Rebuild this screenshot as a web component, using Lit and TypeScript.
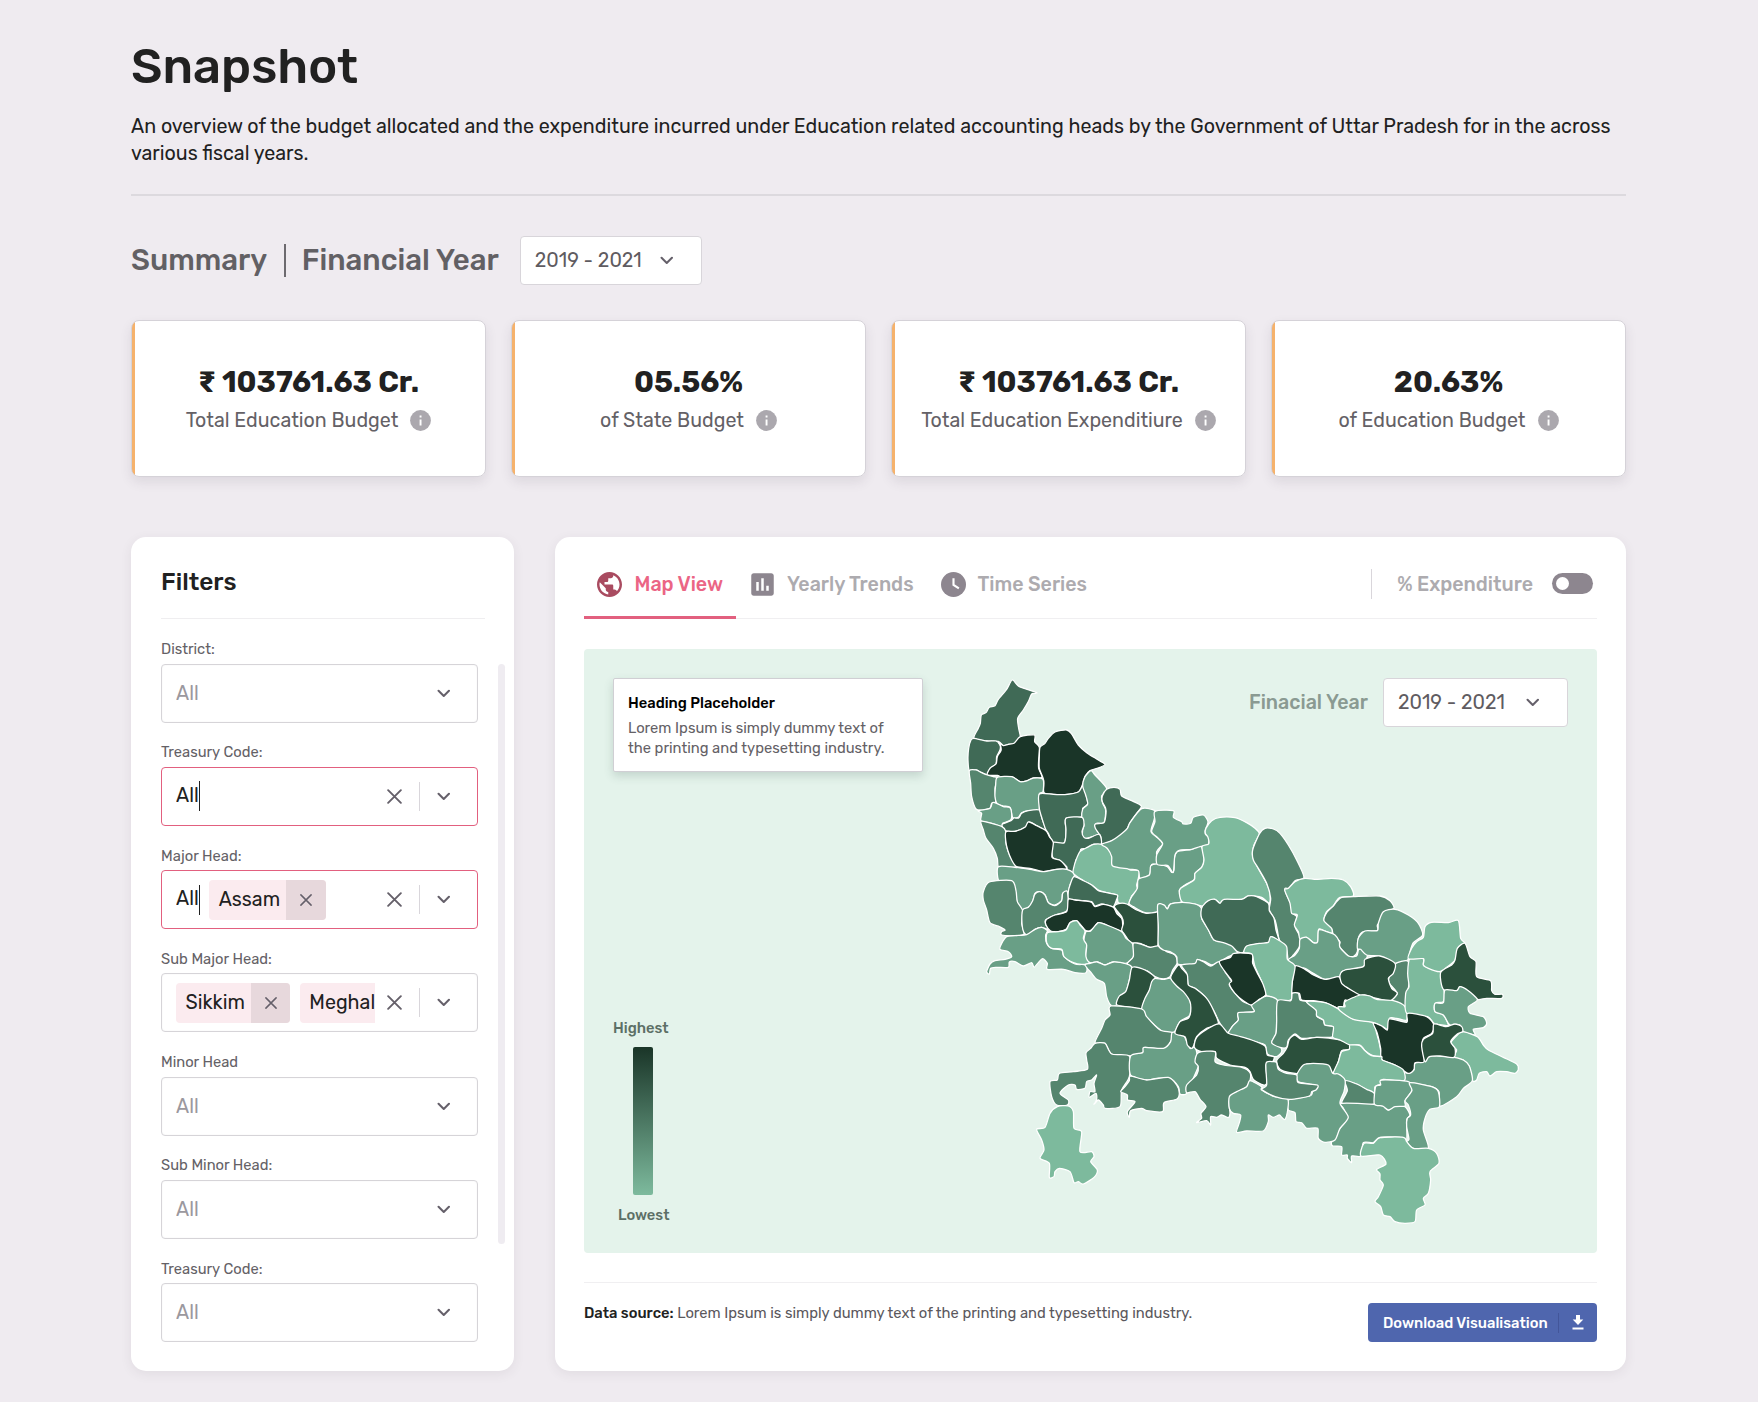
import { LitElement, html, css, svg, nothing } from "lit";
import { customElement } from "lit/decorators.js";

type Tone = "a" | "b" | "c" | "d" | "e" | "f";
type Sheet = [number, number, [Tone, string][]];

/* District outlines, grouped by survey sheet. Each sheet has its own origin and a 3:1 scale. */
const SHEETS: Sheet[] = [
  [940, 660, [
    ["c", "217,60 238,80 290,98 275,102 265,125 250,150 233,175 236,205 241,232 228,250 205,253 190,257 175,244 140,243 102,235 115,205 121,190 124,165 138,158 148,142 165,137 175,118 200,88"],
    ["c", "102,235 140,243 168,243 180,255 180,270 170,290 168,312 150,325 142,345 125,338 108,330 88,332 84,300 86,265 93,240"],
    ["a", "176,248 190,257 205,253 222,250 241,230 283,225 284,245 298,262 296,300 296,325 306,352 280,354 262,362 240,365 215,350 185,352 172,346 142,345 150,325 168,312 172,290 183,272 182,258"],
    ["a", "300,262 315,250 325,235 345,216 380,210 395,222 415,255 440,278 475,300 495,313 480,322 450,332 435,350 428,372 415,396 375,404 340,403 312,398 311,360 298,325 298,290"],
    ["d", "88,332 108,330 125,338 142,345 160,350 172,355 165,385 167,425 155,430 150,445 130,450 108,447 95,410 92,370"],
    ["e", "172,352 215,350 240,365 262,362 280,354 309,358 309,395 298,402 297,450 265,452 245,458 235,472 218,472 210,442 190,438 172,432 165,410 167,375"],
    ["e", "115,452 150,445 157,428 170,430 190,440 210,443 215,462 212,480 188,490 186,500 155,490 123,482 125,460"],
    ["c", "188,492 213,482 222,474 236,474 245,460 265,452 298,450 306,475 317,510 295,500 268,486 255,502 225,514 195,512 187,500"],
    ["c", "298,402 340,403 375,404 415,396 428,378 437,400 443,432 428,445 426,470 378,475 378,510 373,548 340,548 325,520 317,508 306,475 298,445"],
    ["e", "453,332 465,345 500,385 485,408 488,430 497,450 492,488 468,490 470,510 478,522 440,535 428,530 428,510 432,495 425,475 428,448 443,432 437,405 428,378 435,350"],
    ["c", "500,388 522,382 540,388 545,408 575,422 604,438 590,460 570,488 560,510 540,530 510,545 485,553 482,530 466,505 466,492 492,488 498,460 497,445 487,425 487,408"],
    ["c", "378,475 426,472 432,495 426,515 432,532 445,535 478,523 484,552 460,553 440,565 422,568 420,590 408,600 405,625 398,637 382,632 380,620 360,602 338,592 338,548 373,548 378,510"],
    ["d", "123,484 155,490 186,500 197,513 197,545 205,575 218,602 228,620 195,622 175,620 172,595 160,565 138,535 130,510"],
    ["a", "198,515 225,514 255,502 265,486 290,497 318,512 328,530 340,548 336,592 362,602 380,626 350,628 310,635 270,625 230,620 215,600 203,570 197,540"],
  ]],
  [960, 860, [
    ["e", "115,20 165,22 210,28 250,35 290,28 320,28 342,40 342,50 330,75 325,95 308,100 305,122 285,135 265,128 255,105 240,95 225,100 218,125 205,142 188,150 172,130 165,95 155,65 130,62 115,60"],
    ["f", "340,40 342,20 348,0 360,-25 382,-38 400,-47 425,-47 445,-32 457,-10 457,15 495,20 510,30 537,32 535,55 530,75 532,90 515,108 505,133 475,128 470,105 440,98 415,90 395,75 370,62"],
    ["c", "342,50 370,62 395,75 415,92 440,98 472,105 470,118 460,140 440,135 425,132 405,138 395,125 370,122 345,120 325,115 325,95 330,75"],
    ["d", "88,66 155,62 168,92 172,125 188,152 185,190 192,222 165,227 125,225 125,215 135,210 118,200 90,188 80,150 70,120 70,95"],
    ["d", "188,150 205,142 218,122 225,102 240,95 255,105 265,128 285,137 305,122 308,100 322,95 322,150 285,165 257,180 258,195 268,210 245,202 225,208 205,225 192,218 186,190"],
    ["a", "325,118 345,120 375,123 395,127 405,140 430,133 460,142 470,160 485,175 488,195 485,213 460,205 440,195 415,188 400,205 388,213 375,210 360,192 348,182 330,188 318,208 295,215 272,213 258,195 258,180 285,165 320,155"],
    ["b", "463,140 480,130 500,132 530,150 560,160 593,155 595,200 593,258 570,262 540,250 512,248 495,225 485,210 490,190 485,170"],
    ["e", "140,230 165,227 200,224 225,208 245,202 262,212 257,225 260,250 275,265 305,270 312,290 345,312 378,315 378,338 345,338 310,328 262,328 262,310 248,296 235,308 222,322 215,308 190,318 165,305 148,306 145,322 110,322 92,325 88,342 80,335 90,312 105,302 135,298 155,290 145,275 120,268 125,250"],
    ["f", "262,218 295,215 318,210 330,188 350,182 360,195 375,213 370,235 380,250 378,285 388,308 365,313 340,308 312,290 305,268 275,265 260,248"],
    ["e", "378,215 392,213 415,188 440,195 485,215 498,235 518,252 520,290 498,310 460,306 435,315 412,306 390,308 378,290 380,255 372,240"],
    ["d", "520,250 545,253 570,262 595,258 620,275 645,285 652,308 638,330 630,350 610,357 585,350 560,332 515,322 502,310 520,290"],
    ["e", "375,315 390,310 412,306 435,315 460,306 500,312 515,322 508,360 498,395 480,408 470,435 453,436 440,410 433,370 410,358 395,340"],
    ["b", "517,322 555,330 585,352 575,375 565,400 552,425 545,447 510,442 470,434 478,408 497,395 508,360"],
    ["e", "585,355 610,358 632,355 650,375 680,400 692,430 690,465 660,485 642,517 610,515 580,492 550,462 545,445 555,415 568,390 575,365"],
    ["d", "453,438 545,447 560,470 600,510 637,518 632,545 610,567 555,562 548,578 510,588 455,582 435,550 405,548 425,505 435,480 450,465"],
    ["d", "405,550 435,550 455,582 508,588 508,650 485,690 480,740 435,745 430,735 415,720 402,733 410,718 408,700 388,712 390,695 405,695 402,670 410,645 395,660 380,665 375,685 350,688 345,675 325,675 300,700 325,720 322,735 290,735 275,710 270,665 292,660 298,640 340,635 382,628 380,600 378,578 392,565"],
    ["e", "512,588 548,578 552,562 610,565 632,545 637,517 670,525 690,565 705,560 712,585 718,610 700,655 680,700 660,702 655,680 630,655 590,655 560,660 512,645"],
    ["d", "512,648 560,660 625,652 650,675 658,700 650,718 612,728 608,755 560,752 545,745 512,752 508,772 502,755 525,725 503,720 502,705 482,695 495,680 508,662"],
  ]],
  [1120, 760, [
    ["e", "65,146 105,152 102,180 93,215 115,235 128,252 110,275 112,312 95,314 88,345 60,355 55,332 25,327 -22,318 -25,290 -38,265 -55,253 -25,242 0,225 22,205 30,188"],
    ["e", "88,345 92,318 112,312 142,320 155,337 162,330 163,295 172,275 215,268 240,257 250,275 252,300 245,322 225,340 222,360 195,375 178,392 185,425 150,432 142,448 132,435 115,434 113,455 75,458 40,440 27,430 35,410 52,385 55,358"],
    ["e", "105,154 160,152 160,172 185,185 190,192 212,190 220,172 250,165 264,185 256,210 256,222 266,232 264,255 240,260 215,268 180,270 165,285 160,337 150,325 142,316 112,314 110,285 128,252 115,235 95,215 105,185"],
    ["f", "256,220 258,205 275,182 300,172 345,173 380,188 405,205 418,222 402,255 398,290 415,325 440,370 450,400 448,430 425,412 385,408 365,418 310,420 300,430 285,418 265,425 248,438 225,432 187,426 178,400 182,385 222,360 225,340 245,322 252,300 246,260 266,252 264,232"],
    ["d", "418,222 435,205 460,207 480,220 505,255 530,300 552,352 525,362 510,385 495,385 500,405 512,430 518,460 530,470 525,500 540,530 538,560 520,585 505,600 500,570 478,540 472,510 465,480 448,450 452,415 440,370 415,325 400,300 398,270"],
    ["e", "113,435 132,435 142,447 152,432 187,427 225,432 244,445 245,475 265,508 282,540 320,548 350,565 352,578 325,590 300,605 275,615 255,605 232,600 225,612 175,613 170,590 150,575 130,570 115,555 115,500"],
    ["c", "248,438 265,422 285,418 300,430 312,418 365,418 385,408 410,410 445,430 448,452 462,475 468,510 478,545 455,530 448,550 415,552 380,560 370,577 352,575 335,558 310,548 282,540 265,510 245,475 243,455"],
  ]],
  [1180, 860, [
    ["f", "314,90 325,85 345,65 375,55 410,58 455,55 490,60 512,80 520,108 480,112 468,125 460,138 440,155 432,182 455,202 455,220 432,212 416,208 413,245 400,248 380,232 360,238 355,215 343,195 352,165 335,160 330,130"],
    ["d", "470,125 485,112 520,110 600,108 630,122 642,145 618,155 610,178 592,195 592,212 550,215 535,235 532,275 520,290 505,288 478,260 480,245 460,225 455,205 432,182 440,158 460,138"],
    ["e", "360,238 380,232 400,248 413,245 416,210 440,215 465,225 478,245 480,262 505,288 530,288 536,268 550,268 562,285 560,295 550,320 505,330 485,335 478,350 435,358 400,340 375,325 345,318 325,300 345,285 358,265"],
    ["a", "345,318 375,328 400,345 435,358 475,350 485,365 505,385 540,403 515,425 495,420 490,440 475,445 435,428 400,422 365,420 358,400 335,398 337,365"],
    ["f", "192,278 200,258 238,250 265,247 272,230 295,240 320,260 322,298 345,318 337,365 335,400 332,420 290,422 260,408 245,365 225,320 215,282"],
    ["d", "5,315 45,310 52,298 70,305 92,318 118,305 135,335 155,365 148,375 170,405 190,425 215,436 222,455 175,460 175,480 158,498 142,518 120,490 100,450 75,410 45,385 25,375 20,340"],
    ["a", "118,305 150,293 162,280 215,282 218,310 235,345 250,375 257,405 235,420 215,435 190,422 165,400 148,372 155,362 135,335"],
    ["b", "-5,315 5,325 22,345 25,375 45,385 80,415 100,450 115,492 80,505 50,530 42,555 35,565 22,555 15,530 -15,520 0,485 25,475 32,455 30,425 10,395 -10,378 -28,352"],
    ["e", "260,408 293,422 290,480 288,520 275,548 300,560 305,575 290,590 262,582 255,555 225,545 175,530 145,522 158,498 175,480 175,458 222,455 215,436 240,418"],
    ["b", "118,492 145,520 175,528 215,540 255,558 262,585 282,590 278,605 258,615 262,665 250,675 220,658 210,635 195,622 150,615 110,595 105,575 65,575 43,562 50,532 80,508"],
    ["d", "293,422 332,422 337,400 355,400 360,420 380,425 408,450 412,470 430,480 435,495 460,500 458,530 410,532 365,535 345,522 325,540 320,562 300,562 275,548 288,520 290,485"],
    ["b", "290,602 310,580 322,560 328,538 345,525 365,538 410,532 450,535 480,540 512,550 508,568 485,572 475,605 460,638 440,625 380,612 365,640 330,638 300,628"],
  ]],
  [1340, 860, [
    ["e", "130,155 165,148 205,165 235,190 248,225 220,248 210,275 203,300 165,310 140,300 118,288 80,285 62,268 52,265 55,235 75,213 112,212 115,190"],
    ["d", "165,312 203,303 210,345 205,385 195,440 180,430 152,423 172,400 148,370 148,348 160,340"],
    ["b", "0,345 15,330 70,320 75,298 120,288 165,310 160,340 145,355 155,385 172,400 150,423 110,415 75,405 60,405 25,385 5,370"],
    ["f", "-100,425 -45,428 0,450 35,475 98,488 110,520 120,560 122,590 95,585 75,572 60,555 30,555 0,540 -22,532 -20,500 -45,495 -50,480 -70,468 -72,450"],
    ["f", "15,425 60,405 90,408 110,418 160,422 195,440 200,480 170,475 148,475 145,508 125,498 98,487 40,478 0,452 -5,440 15,440"],
    ["f", "210,295 250,295 252,318 300,335 308,370 313,400 310,425 285,430 285,455 310,465 325,495 305,495 282,490 262,470 200,460 197,400 207,380 203,340"],
    ["f", "215,265 230,245 250,232 255,200 275,187 325,188 355,182 362,235 375,250 355,262 345,300 320,322 298,335 265,325 250,315 250,296 205,296"],
    ["b", "375,250 390,290 408,305 410,350 452,362 455,392 465,403 487,403 485,415 440,415 412,418 385,395 360,380 350,392 310,388 302,338 335,315 345,300 352,265"],
    ["e", "315,390 350,392 360,380 385,392 412,418 400,430 385,440 390,460 430,470 440,490 430,503 400,508 405,525 370,515 360,495 335,497 325,490 310,465 285,455 285,430 310,428"],
    ["f", "368,515 412,530 430,555 445,570 490,592 530,612 535,628 525,640 500,635 470,635 450,648 440,635 418,640 410,660 397,662 388,620 370,600 342,592 350,570 332,550 352,525"],
    ["e", "192,638 205,640 222,630 225,610 250,605 268,590 300,588 342,592 370,600 388,618 397,662 370,685 350,710 300,738 297,695 275,680 235,672 192,665"],
    ["a", "203,460 260,470 282,495 275,520 250,535 248,560 252,605 225,608 222,628 205,640 165,615 125,598 122,565 112,520 100,490 125,498 142,510 148,477 200,487"],
    ["b", "282,492 318,500 345,492 365,500 368,515 352,522 332,545 345,565 342,592 300,588 268,590 255,605 245,560 250,538 278,520"],
    ["f", "30,555 60,557 75,572 95,587 125,590 127,600 165,615 190,630 192,662 130,658 122,672 105,680 103,698 80,690 50,672 15,662 0,645 -20,640 -5,605 5,575 28,568"],
    ["d", "15,662 50,672 80,688 103,700 103,732 30,733 5,728 22,692"],
    ["e", "5,730 103,733 128,738 145,750 165,738 195,740 210,765 200,780 200,840 180,832 120,832 100,848 70,848 63,888 35,888 35,908 22,895 22,885 5,885 5,860 -22,858 -25,845 0,805 22,775 10,745"],
    ["e", "125,660 205,665 216,690 195,722 195,738 165,740 145,750 128,738 103,732 107,680 122,675"],
    ["e", "210,668 275,680 295,695 298,740 270,748 255,775 250,810 265,865 220,865 200,845 207,838 200,800 202,775 212,765 205,735 195,722 216,692"],
    ["f", "72,850 100,850 120,833 190,832 200,845 220,865 265,865 290,880 297,910 270,935 272,960 265,1000 250,1015 255,1035 230,1050 225,1085 195,1090 165,1085 150,1070 130,1065 122,1040 105,1025 115,1010 130,975 120,960 120,942 110,928 138,912 120,885 63,888"],
  ]],
  [1020, 1060, [
    ["e", "808,118 870,108 878,95 892,80 870,72 835,65 830,45 850,15 880,10 925,15 938,40 955,42 975,60 972,95 960,130 985,172 960,205 945,240 915,247 895,235 893,205 860,205 845,188 828,185 825,158 805,150"],
    ["d", "585,5 610,15 665,22 690,38 690,62 680,80 640,103 627,125 630,160 625,173 605,165 590,172 572,170 572,195 560,182 530,188 545,175 543,160 558,140 540,118 525,95 500,98 500,75 530,45 535,20 525,5 535,-22 585,-25"],
    ["e", "690,62 725,80 725,90 765,110 803,118 803,150 795,178 785,172 778,165 760,172 745,165 745,185 730,213 680,213 650,217 658,188 662,165 640,160 628,145 628,110 650,95 680,80"],
    ["d", "770,8 775,28 800,40 830,45 835,68 892,75 888,90 875,95 868,108 810,118 765,110 725,88 740,75 738,10 760,5"],
    ["f", "112,140 145,138 160,155 162,205 185,215 180,275 215,275 222,290 212,305 232,330 222,352 190,372 175,365 162,368 150,335 118,325 105,335 102,350 88,352 88,310 60,295 72,270 65,240 50,208 75,202 90,160"],
  ]],
];

/* Turns a point list into a closed path, rounding each corner slightly. */
function outline(list: string): string {
  const p = list.split(" ").map((s) => s.split(",").map(Number));
  const n = p.length;
  const k = 0.13;
  let d = `M${p[0][0]} ${p[0][1]}`;
  for (let i = 0; i < n; i++) {
    const [a, b, c, e] = [p[(i - 1 + n) % n], p[i], p[(i + 1) % n], p[(i + 2) % n]];
    const c1 = [b[0] + (c[0] - a[0]) * k, b[1] + (c[1] - a[1]) * k];
    const c2 = [c[0] - (e[0] - b[0]) * k, c[1] - (e[1] - b[1]) * k];
    d += `C${c1.map((v) => v.toFixed(1)).join(" ")} ${c2.map((v) => v.toFixed(1)).join(" ")} ${c[0]} ${c[1]}`;
  }
  return d + "Z";
}

const chevron = html`<svg class="chevron" viewBox="0 0 14 9"><path d="M1.6 1.6 7 7l5.4-5.4" fill="none" stroke="currentColor" stroke-width="2.1" stroke-linecap="round" stroke-linejoin="round"/></svg>`;
const cross = (size: number, w: number) => html`<svg width=${size} height=${size} viewBox="0 0 16 16"><path d="M1.2 1.2 14.8 14.8M14.8 1.2 1.2 14.8" fill="none" stroke="#65606a" stroke-width=${w} stroke-linecap="round"/></svg>`;
const info = html`<svg width="21" height="21" viewBox="0 0 21 21"><circle cx="10.5" cy="10.5" r="10.4" fill="#aba8ae"/><path d="M9.6 9.4h1.9v6H9.6zM9.6 5.6h1.9v1.9H9.6z" fill="#fff"/></svg>`;

const base = css`
  :host { display: block; font-family: Rubik, Inter, "Open Sans", sans-serif; color: #212121; }
  * { box-sizing: border-box; }
  svg { display: block; flex: none; }
  .chevron { width: 13.5px; height: 9px; color: #65606a; }
`;

@customElement("year-select")
class YearSelect extends LitElement {
  static styles = [base, css`
    .box { display: flex; align-items: center; gap: var(--arrow-gap, 18px); height: 49px; padding-left: 14px; background: #fff;
      border: 1px solid #d8d5da; border-radius: 4px; font-size: 19.62px; color: #5f5c61; }
    .years { padding-bottom: 1px; }
  `];
  render() {
    return html`<div class="box"><span class="years">2019 - 2021</span>${chevron}</div>`;
  }
}

@customElement("stat-card")
class StatCard extends LitElement {
  static properties = { value: {}, label: {} };
  declare value: string; declare label: string;
  static styles = [base, css`
    .card { display: flex; flex-direction: column; align-items: center; height: 157px; padding-top: 44px;
      background: linear-gradient(90deg, #f5b26c 3.5px, #fff 3.5px); border: 1px solid #d5d2d8; border-radius: 8px;
      box-shadow: 0 5px 12px rgba(60, 50, 70, .1); }
    .value { font-size: 29.43px; line-height: 34px; font-weight: 700; }
    .label { display: flex; align-items: center; gap: 12px; margin-top: 9.5px; font-size: 19.62px; line-height: 24px; color: #646166; }
    .label span { padding-top: 1px; }
  `];
  render() {
    return html`<div class="card">
      <span class="value">${this.value}</span>
      <div class="label"><span>${this.label}</span>${info}</div>
    </div>`;
  }
}

interface Field { label: string; typed?: boolean; tags?: string[] }

@customElement("filter-field")
class FilterField extends LitElement {
  static properties = { field: { attribute: false } };
  declare field: Field;
  static styles = [base, css`
    .label { display: block; font-size: 14.72px; line-height: 18px; margin-bottom: 5.5px; color: #646166; }
    .box { display: flex; align-items: center; height: 59px; padding: 0 27px 0 14px; border: 1px solid #d6d4d8; border-radius: 4px;
      background: #fff; font-size: 19.62px; box-shadow: inset 0 0 2px rgba(0, 0, 0, .06); }
    .typed { border-color: #e2607f; box-shadow: none; }
    .values { display: flex; flex: 1; align-items: center; gap: 9.5px; overflow: hidden; }
    .hint { color: #9b989e; }
    .entry { display: flex; align-items: center; height: 30px; padding-bottom: 2px; border-right: 1.5px solid #212121; }
    .tag { display: flex; flex: none; align-items: center; height: 40px; background: #fbebef; border-radius: 4px; overflow: hidden; }
    .tag span { padding: 0 6px 0 9.5px; }
    .tag .drop { display: flex; align-items: center; justify-content: center; width: 39.5px; height: 40px; background: #e7d8dc; }
    .clear { display: flex; margin: 0 17px 0 12px; }
    .rule { width: 1px; height: 29px; margin-right: 17px; background: #d9d6db; }
  `];
  render() {
    const f = this.field;
    const busy = f.typed || f.tags;
    return html`<span class="label">${f.label}</span>
      <div class="box ${f.typed ? "typed" : ""}">
        <div class="values">
          ${f.typed ? html`<span class="entry">All</span>` : nothing}
          ${(f.tags ?? []).map((t) => html`<div class="tag"><span>${t}</span><div class="drop">${cross(12, 2)}</div></div>`)}
          ${busy ? nothing : html`<span class="hint">All</span>`}
        </div>
        ${busy ? html`<span class="clear">${cross(15, 2)}</span><span class="rule"></span>` : nothing}
        ${chevron}
      </div>`;
  }
}

@customElement("district-map")
class DistrictMap extends LitElement {
  static styles = [base, css`
    path { stroke: #fff; stroke-width: 3.8; stroke-linejoin: round; }
    .a { fill: #1a3528; } .b { fill: #2b503c; } .c { fill: #406a56; }
    .d { fill: #55856e; } .e { fill: #699f86; } .f { fill: #7dba9d; }
  `];
  render() {
    return html`<svg width="1013" height="604" viewBox="584 649 1013 604">
      ${SHEETS.map(([x, y, areas]) => svg`<g transform="translate(${x} ${y}) scale(.33333)">
        ${areas.map(([tone, pts]) => svg`<path class=${tone} d=${outline(pts)}></path>`)}</g>`)}
    </svg>`;
  }
}

const FIELDS: Field[] = [
  { label: "District:" },
  { label: "Treasury Code:", typed: true },
  { label: "Major Head:", typed: true, tags: ["Assam"] },
  { label: "Sub Major Head:", tags: ["Sikkim", "Meghalaya"] },
  { label: "Minor Head" },
  { label: "Sub Minor Head:" },
  { label: "Treasury Code:" },
];

const STATS = [
  ["₹ 103761.63 Cr.", "Total Education Budget"],
  ["05.56%", "of State Budget"],
  ["₹ 103761.63 Cr.", "Total Education Expenditiure"],
  ["20.63%", "of Education Budget"],
];

const globe = svg`<path fill-rule="evenodd" d="M12 2C6.48 2 2 6.48 2 12s4.48 10 10 10 10-4.48 10-10S17.52 2 12 2zm-1 17.93c-3.95-.49-7-3.85-7-7.93 0-.62.08-1.21.21-1.79L9 15v1c0 1.1.9 2 2 2v1.93zm6.9-2.54c-.26-.81-1-1.39-1.9-1.39h-1v-3c0-.55-.45-1-1-1H8v-2h2c.55 0 1-.45 1-1V7h2c1.1 0 2-.9 2-2v-.41c2.93 1.19 5 4.06 5 7.41 0 2.08-.8 3.97-2.1 5.39z"/>`;
const chart = svg`<path fill-rule="evenodd" d="M19 3H5c-1.1 0-2 .9-2 2v14c0 1.1.9 2 2 2h14c1.1 0 2-.9 2-2V5c0-1.1-.9-2-2-2zM9 17H7v-7h2v7zm4 0h-2V7h2v10zm4 0h-2v-4h2v4z"/>`;
const clock = svg`<path d="M12 2a10 10 0 1 0 0 20 10 10 0 0 0 0-20z"/><path d="M12 7v5.4l4.3 2.7" fill="none" stroke="#fff" stroke-width="1.7"/>`;

@customElement("app-root")
class AppRoot extends LitElement {
  static styles = [base, css`
    :host { height: 1402px; padding: 38px 132px 0 131px; background: #efebf0; overflow: hidden; }
    h1 { margin: 0; font-size: 49.05px; line-height: 56px; font-weight: 500; }
    .intro { margin: 19px 0 27px; font-size: 19.67px; line-height: 27px; }
    .rule { height: 2px; background: #dcd9de; }
    .summary { display: flex; align-items: center; height: 49px; margin-top: 40px; font-size: 29.43px; font-weight: 500; color: #626064; }
    .word { padding-bottom: 2px; }
    .bar { width: 2px; height: 33px; margin: 0 16px 1px 16.5px; background: #6d6a6f; }
    .summary year-select { width: 182px; margin-left: 21px; font-weight: 400; }
    .cards { display: grid; grid-template-columns: repeat(4, 1fr); gap: 25px; margin-top: 34.5px; }
    .board { display: grid; grid-template-columns: 383px 1071px; justify-content: space-between; margin-top: 60.5px; }
    .panel { position: relative; height: 834px; padding: 0 29px; background: #fff; border-radius: 15px; box-shadow: 0 3px 12px rgba(60, 50, 70, .08); }
    .filters { padding-left: 30px; }
    .filters h2 { margin: 0; padding: 30px 0 21px; font-size: 24.53px; line-height: 30px; font-weight: 500; border-bottom: 1.5px solid #efeef0; }
    .fields { display: flex; flex-direction: column; gap: 20.75px; width: 317px; margin-top: 21px; }
    .scroll { position: absolute; top: 127px; right: 9px; width: 7px; height: 580px; border-radius: 4px; background: #efecf1; }
    .tabs { display: flex; height: 82px; border-bottom: 1.5px solid #f0eff1; font-size: 19.62px; font-weight: 500; color: #adabaf; }
    .tab { display: flex; align-items: center; gap: 12.5px; height: 82px; padding: 15px 13px 0; border-bottom: 3px solid transparent; }
    .tab + .tab { gap: 12px; padding-left: 14px; }
    .tab svg { width: 25px; height: 25px; overflow: visible; fill: #8d868f; }
    .on { color: #eb6585; border-color: #e2607f; }
    .on svg { fill: #a94b60; }
    .measure { display: flex; align-items: center; margin-left: auto; padding: 12.5px 4px 0 0; }
    .measure .name { padding-top: 1px; }
    .sep { width: 1px; height: 30px; margin-right: 25px; background: #d9d6db; }
    .toggle { width: 41px; height: 21px; margin-left: 19px; padding: 4px; border-radius: 11px; background: #8d868f; }
    .knob { width: 13px; height: 13px; border-radius: 50%; background: #fff; }
    .map { position: relative; display: flex; justify-content: space-between; align-items: flex-start; height: 604px; margin-top: 30px; padding: 29px 29.5px 29px 29px; border-radius: 4px; background: #e4f3eb; }
    .map district-map { position: absolute; left: 0; top: 0; }
    .side { display: flex; flex-direction: column; justify-content: space-between; height: 100%; }
    .tip { width: 310px; height: 94px; padding: 15px 14px; background: #fff; border: 1px solid #d0cfd4; border-radius: 2px; box-shadow: 0 4px 10px rgba(60, 90, 80, .2); font-size: 14.75px; line-height: 20px; color: #646166; }
    .tip strong { display: block; margin-bottom: 5px; font-weight: 500; color: #000; line-height: 19px; }
    .legend { display: flex; flex-direction: column; align-items: flex-start; font-size: 14.75px; line-height: 18px; font-weight: 500; color: #5c6f66; }
    .ramp { width: 20px; height: 148px; margin: 10px 0 11px 20px; border-radius: 2px; background: linear-gradient(#1a3528, #7dba9d); }
    .low { margin-left: 5px; }
    .year { position: relative; display: flex; align-items: center; gap: 15px; font-size: 19.62px; font-weight: 500; color: #8a9a92; }
    .year year-select { --arrow-gap: 21px; width: 184.5px; font-weight: 400; }
    .foot { display: flex; justify-content: space-between; align-items: flex-start; margin-top: 29px; padding-top: 20px; border-top: 1.5px solid #f0eff1; font-size: 14.75px; line-height: 20px; color: #5b585d; }
    .foot strong { font-weight: 500; color: #212121; }
    .button { display: flex; align-items: center; height: 39px; width: 229px; padding-left: 15px; border-radius: 4px; background: #4f66ae; color: #fff; font-weight: 500; }
    .split { width: 1px; height: 20px; margin: 0 13px 0 10px; background: #43569a; }
  `];
  render() {
    return html`
      <h1>Snapshot</h1>
      <p class="intro">An overview of the budget allocated and the expenditure incurred under Education related accounting heads by the Government of Uttar Pradesh for in the across various fiscal years.</p>
      <div class="rule"></div>
      <div class="summary"><span class="word">Summary</span><span class="bar"></span><span class="word">Financial Year</span><year-select></year-select></div>
      <div class="cards">
        ${STATS.map(([value, label]) => html`<stat-card .value=${value} .label=${label}></stat-card>`)}
      </div>
      <div class="board">
        <section class="panel filters">
          <h2>Filters</h2>
          <div class="fields">${FIELDS.map((f) => html`<filter-field .field=${f}></filter-field>`)}</div>
          <div class="scroll"></div>
        </section>
        <section class="panel">
          <div class="tabs">
            <div class="tab on"><svg viewBox="2 2 20 20">${globe}</svg><span>Map View</span></div>
            <div class="tab"><svg viewBox="2 2 20 20">${chart}</svg><span>Yearly Trends</span></div>
            <div class="tab"><svg viewBox="2 2 20 20">${clock}</svg><span>Time Series</span></div>
            <div class="measure"><span class="sep"></span><span class="name">% Expenditure</span><span class="toggle"><div class="knob"></div></span></div>
          </div>
          <div class="map">
            <district-map></district-map>
            <div class="side">
              <div class="tip"><strong>Heading Placeholder</strong>Lorem Ipsum is simply dummy text of the printing and typesetting industry.</div>
              <div class="legend"><span>Highest</span><div class="ramp"></div><span class="low">Lowest</span></div>
            </div>
            <div class="year"><span>Finacial Year</span><year-select></year-select></div>
          </div>
          <div class="foot">
            <div><strong>Data source:</strong> Lorem Ipsum is simply dummy text of the printing and typesetting industry.</div>
            <div class="button"><span>Download Visualisation</span><span class="split"></span>
              <svg width="12" height="15" viewBox="0 0 12 15" fill="#fff"><path d="M4 0h4v4.5h3.3L6 10 .7 4.5H4zM.5 12.5h11v2H.5z"/></svg></div>
          </div>
        </section>
      </div>`;
  }
}
